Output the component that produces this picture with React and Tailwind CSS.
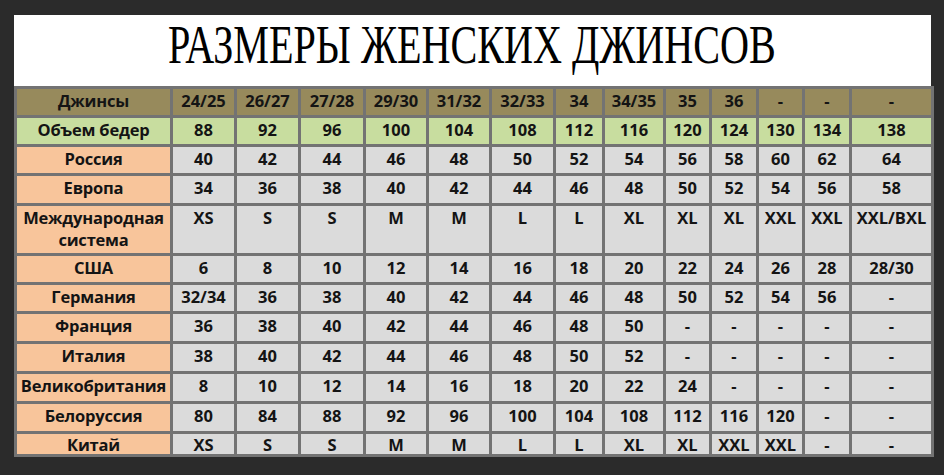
import React from "react";

const widths = [156, 64, 64, 65, 63, 63, 64, 49, 61, 46, 47, 46, 47, 82];

const rows = [
    { label: "Джинсы", kind: "head", h: 29, cells: ["24/25", "26/27", "27/28", "29/30", "31/32", "32/33", "34", "34/35", "35", "36", "-", "-", "-"] },
    { label: "Объем бедер", kind: "green", h: 29, cells: ["88", "92", "96", "100", "104", "108", "112", "116", "120", "124", "130", "134", "138"] },
    { label: "Россия", h: 29, cells: ["40", "42", "44", "46", "48", "50", "52", "54", "56", "58", "60", "62", "64"] },
    { label: "Европа", h: 30, cells: ["34", "36", "38", "40", "42", "44", "46", "48", "50", "52", "54", "56", "58"] },
    { label: "Международная система", h: 50, cells: ["XS", "S", "S", "M", "M", "L", "L", "XL", "XL", "XL", "XXL", "XXL", "XXL/BXL"] },
    { label: "США", h: 29, cells: ["6", "8", "10", "12", "14", "16", "18", "20", "22", "24", "26", "28", "28/30"] },
    { label: "Германия", h: 29, cells: ["32/34", "36", "38", "40", "42", "44", "46", "48", "50", "52", "54", "56", "-"] },
    { label: "Франция", h: 30, cells: ["36", "38", "40", "42", "44", "46", "48", "50", "-", "-", "-", "-", "-"] },
    { label: "Италия", h: 30, cells: ["38", "40", "42", "44", "46", "48", "50", "52", "-", "-", "-", "-", "-"] },
    { label: "Великобритания", h: 30, cells: ["8", "10", "12", "14", "16", "18", "20", "22", "24", "-", "-", "-", "-"] },
    { label: "Белоруссия", h: 30, cells: ["80", "84", "88", "92", "96", "100", "104", "108", "112", "116", "120", "-", "-"] },
    { label: "Китай", h: 23, last: true, cells: ["XS", "S", "S", "M", "M", "L", "L", "XL", "XL", "XXL", "XXL", "-", "-"] },
];

function cellColor(kind, isLabel) {
    if (kind === "head") return "bg-[#978a5c]";
    if (kind === "green") return "bg-[#c8dd9f]";
    return isLabel ? "bg-[#f8c59b]" : "bg-[#dbdbdb]";
}

export default function App() {
    return (
        <div className="w-[944px] h-[475px] bg-[#2b2b2b] overflow-hidden pt-[15px] pl-[14px]">
            <div className="w-[917px] bg-white">
                <div className="h-[71px] flex items-start pt-[2px] pl-[154px] overflow-hidden">
                    <h1 className="font-['Liberation_Serif',serif] text-[55px] leading-none text-black origin-left scale-x-[0.73] whitespace-nowrap">
                        РАЗМЕРЫ ЖЕНСКИХ ДЖИНСОВ
                    </h1>
                </div>
                <table className="table-fixed border-collapse w-[917px] font-['Open_Sans',sans-serif] font-bold text-[16.5px] text-[#141414]">
                    <colgroup>
                        {widths.map((w, i) => (
                            <col key={i} style={{ width: w }} />
                        ))}
                    </colgroup>
                    <tbody>
                        {rows.map((row) => {
                            const pad = row.last ? "leading-[17px] pt-[2px]" : "leading-[22px] pt-[1px]";
                            return (
                                <tr key={row.label} style={{ height: row.h }}>
                                    <td className={`border-[3px] border-[#737373] align-top text-center px-0 tracking-[-0.2px] ${pad} ${cellColor(row.kind, true)}`}>
                                        {row.label}
                                    </td>
                                    {row.cells.map((c, i) => (
                                        <td
                                            key={i}
                                            className={`border-[3px] border-[#737373] align-top text-center px-0 ${pad} ${cellColor(row.kind, false)}`}
                                        >
                                            {c}
                                        </td>
                                    ))}
                                </tr>
                            );
                        })}
                    </tbody>
                </table>
            </div>
        </div>
    );
}
